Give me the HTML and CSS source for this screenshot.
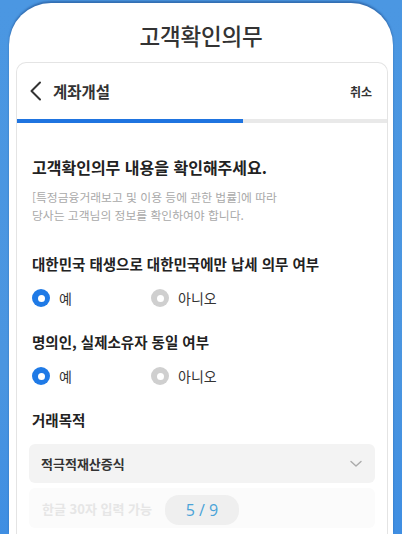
FILE: index.html
```html
<!DOCTYPE html>
<html lang="ko">
<head>
    <meta charset="UTF-8">
    <meta name="viewport" content="width=device-width, initial-scale=1.0">
    <title>고객확인의무</title>
    <link rel="stylesheet" href="styles.css">
</head>
<body>
    <div class="phone">
        <h1 class="screen-title">고객확인의무</h1>

        <div class="card">
            <div class="card-header">
                <button class="back-button" aria-label="뒤로">
                    <svg width="14" height="20" viewBox="0 0 14 20">
                        <path d="M11 1.5 L2.5 10 L11 18.5" fill="none" stroke="#333" stroke-width="2" stroke-linecap="round" stroke-linejoin="round"/>
                    </svg>
                </button>
                <span class="header-title">계좌개설</span>
                <span class="cancel">취소</span>
            </div>

            <div class="progress">
                <div class="progress-fill"></div>
            </div>

            <div class="content">
                <h2 class="heading">고객확인의무 내용을 확인해주세요.</h2>
                <p class="notice">[특정금융거래보고 및 이용 등에 관한 법률]에 따라<br>당사는 고객님의 정보를 확인하여야 합니다.</p>

                <h3 class="question">대한민국 태생으로 대한민국에만 납세 의무 여부</h3>
                <div class="radios">
                    <label class="radio"><span class="dot checked"></span>예</label>
                    <label class="radio"><span class="dot"></span>아니오</label>
                </div>

                <h3 class="question">명의인, 실제소유자 동일 여부</h3>
                <div class="radios">
                    <label class="radio"><span class="dot checked"></span>예</label>
                    <label class="radio"><span class="dot"></span>아니오</label>
                </div>

                <h3 class="question">거래목적</h3>
                <div class="select">
                    <span>적극적재산증식</span>
                    <svg width="12" height="8" viewBox="0 0 12 8">
                        <path d="M1 1.5 L6 6 L11 1.5" fill="none" stroke="#aaa" stroke-width="1.4" stroke-linecap="round" stroke-linejoin="round"/>
                    </svg>
                </div>
                <div class="text-input">한글 30자 입력 가능</div>
            </div>
        </div>

        <div class="pager">5 / 9</div>
    </div>
</body>
</html>
```

FILE: styles.css
```css
body {
    font-family: "Noto Sans CJK KR", "Noto Sans", sans-serif;
    margin: 0;
    height: 534px;
    overflow: hidden;
    background: linear-gradient(180deg, #4b97e2 0%, #4a95e0 70%, #3f8ee2 100%);
    color: #222;
}

.phone {
    position: relative;
    margin: 3px 9px 0;
    height: 531px;
    background-color: #fff;
    border-radius: 42px 42px 0 0;
    box-shadow: 0 -2px 2px rgba(20, 60, 120, 0.45);
    display: flex;
    flex-direction: column;
}

.screen-title {
    margin: 0;
    padding: 17px 0 12px;
    text-align: center;
    font-size: 22.5px;
    line-height: 30px;
    font-weight: 500;
    color: #333;
    letter-spacing: -0.2px;
}

.card {
    margin: 0 5px 0 7px;
    flex: 1;
    border: 1px solid #e4e4e4;
    border-bottom: none;
    border-radius: 10px 10px 0 0;
    overflow: hidden;
}

.card-header {
    display: flex;
    align-items: center;
    height: 56px;
    padding: 0 15px 0 12px;
}

.back-button {
    background: none;
    border: none;
    padding: 0;
    width: 16px;
    height: 24px;
    display: flex;
    align-items: center;
}

.header-title {
    margin-left: 8px;
    font-size: 15.5px;
    font-weight: 700;
    color: #333;
}

.cancel {
    margin-left: auto;
    font-size: 12px;
    font-weight: 700;
    color: #333;
}

.progress {
    height: 4px;
    background-color: #e9e9e9;
}

.progress-fill {
    width: 61%;
    height: 100%;
    background-color: #1f74e0;
}

.content {
    padding: 32px 12px 0 15px;
}

.heading {
    margin: 0;
    font-size: 16px;
    line-height: 24px;
    font-weight: 700;
    color: #222;
}

.notice {
    margin: 9px 0 0;
    font-size: 11.8px;
    line-height: 18px;
    color: #a9a9a9;
}

.question {
    margin: 30px 0 0;
    font-size: 14.5px;
    line-height: 20px;
    font-weight: 700;
    color: #222;
}

.radios + .question {
    margin-top: 22px;
}

.radios {
    display: grid;
    grid-template-columns: 119px 119px;
    margin-top: 12px;
    height: 24px;
}

.radio {
    display: flex;
    align-items: center;
    gap: 9px;
    font-size: 14px;
    color: #333;
}

.dot {
    width: 18px;
    height: 18px;
    border-radius: 50%;
    background-color: #cfcfcf;
    display: flex;
    align-items: center;
    justify-content: center;
}

.dot::after {
    content: "";
    width: 7px;
    height: 7px;
    border-radius: 50%;
    background-color: #fff;
}

.dot.checked {
    background-color: #1f7ae6;
}

.select {
    margin: 14px 0 0 -3px;
    height: 39px;
    padding: 0 13px 0 12px;
    background-color: #f3f3f3;
    border-radius: 6px;
    display: flex;
    align-items: center;
    justify-content: space-between;
    font-size: 13px;
    font-weight: 700;
    color: #333;
}

.text-input {
    margin: 5px 0 0 -3px;
    height: 40px;
    padding: 0 13px;
    background-color: #fbfbfb;
    border-radius: 6px;
    display: flex;
    align-items: center;
    font-size: 13px;
    font-weight: 700;
    color: #e6e6e6;
}

.pager {
    position: absolute;
    left: 156px;
    top: 492px;
    width: 74px;
    height: 30px;
    border-radius: 14px;
    background-color: #efefef;
    color: #4aa3d8;
    font-family: "Open Sans", "Noto Sans", sans-serif;
    font-size: 16px;
    line-height: 30px;
    text-align: center;
}
```
